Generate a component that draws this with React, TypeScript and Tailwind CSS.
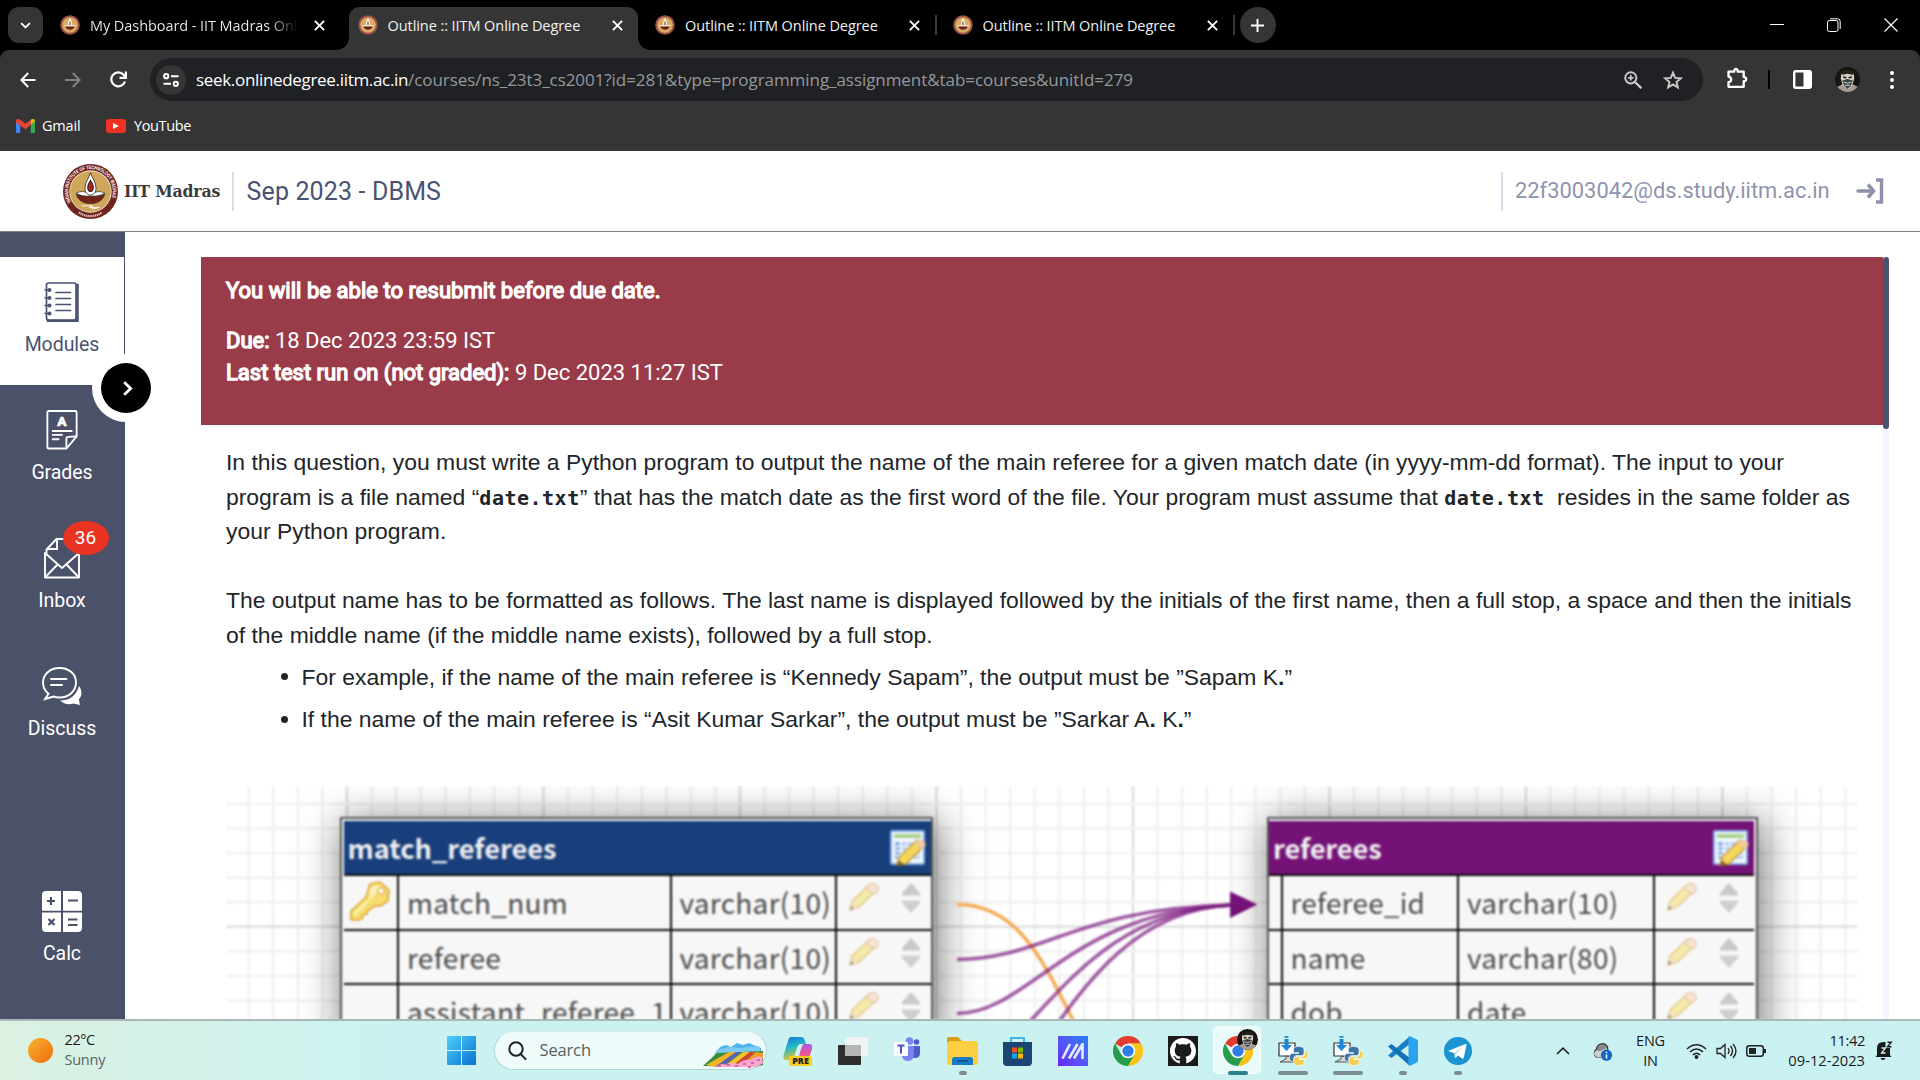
import React from 'react';

type P = { className?: string };

function Seal({ className = '' }: P) {
  return (
    <svg viewBox="0 0 100 100" className={className}>
      <circle cx="50" cy="50" r="50" fill="#702420" />
      <circle cx="50" cy="50" r="38.5" fill="#f3e6cf" />
      <circle cx="50" cy="50" r="37" fill="#cfa65a" />
      <defs>
        <path id="sealTop" d="M14.4 69 A40.5 40.5 0 1 1 85.6 69" />
      </defs>
      <text fill="#fff" fontSize="9.4" fontWeight="700" fontFamily="Liberation Sans, sans-serif">
        <textPath href="#sealTop" textLength="158" lengthAdjust="spacingAndGlyphs">INDIAN INSTITUTE OF TECHNOLOGY MADRAS</textPath>
      </text>
      <path d="M29 88c12 9 30 9 42 0" fill="none" stroke="#e8cfc4" strokeWidth="4" strokeDasharray="2.2 1.2" />
      <path d="M50 16c-3 10-10 17-10 28 0 8 4 13 10 13s10-5 10-13c0-11-7-18-10-28z" fill="#fff" stroke="#222" strokeWidth="1.4" />
      <path d="M50 30c-3 4-5 8-5 12 0 5 2 8 5 8s5-3 5-8c0-4-2-8-5-12z" fill="#c21f1f" stroke="#222" strokeWidth="2" />
      <path d="M24 53c8-4 16-4 20 1 4 4 8 4 12 0 4-5 12-5 20-1-6 4-14 6-26 6s-20-2-26-6z" fill="#fff" stroke="#222" strokeWidth="1.2" />
      <path d="M24 54c2 11 12 18 26 18s24-7 26-18c-6 4-14 5-26 5s-20-1-26-5z" fill="#74231b" stroke="#222" strokeWidth="1" />
      <path d="M34 76h20l-6 3h18l-14 3" fill="none" stroke="#fff" strokeWidth="1.6" />
    </svg>
  );
}

function MiniSeal() {
  return (
    <svg viewBox="0 0 20 20" className="size-5 shrink-0">
      <circle cx="10" cy="10" r="9.8" fill="#9b5148" />
      <circle cx="10" cy="10" r="7.8" fill="#d8ad62" />
      <path d="M10 3c-1 2-2 3.500-2 5.500 0 1.500.8 2.500 2 2.500s2-1 2-2.500c0-2-1-3.500-2-5.500z" fill="#fff" />
      <path d="M9.400 6.500h1.200v4H9.400z" fill="#8b2c26" />
      <path d="M4.500 10.300h11v1.200h-11z" fill="#fff" />
      <path d="M5.200 11.500h9.600c-.6 2-2.400 3.200-4.800 3.200s-4.200-1.200-4.800-3.200z" fill="#6d231d" />
    </svg>
  );
}

function X({ className = '' }: P) {
  return (
    <svg viewBox="0 0 10 10" className={className} stroke="#fff" fill="none">
      <path d="M.8.8l8.400 8.400M9.200.8L.8 9.200" strokeWidth="1.700" />
    </svg>
  );
}

function Tab({ title, active, fade, divider }: { title: string; active?: boolean; fade?: boolean; divider?: boolean }) {
  return (
    <div className="relative flex h-full w-[297.5px] shrink-0 items-start pt-[7px]">
      {active && (
        <>
          <div className="absolute -left-3 bottom-0 size-3 bg-[radial-gradient(circle_at_0_0,#000_11.5px,#353535_12px)]" />
          <div className="absolute right-[-3.5px] bottom-0 size-3 bg-[radial-gradient(circle_at_100%_0,#000_11.5px,#353535_12px)]" />
        </>
      )}
      <div className={`relative flex h-[43px] w-[289px] items-center pb-[7px] pl-[9px] ${active ? 'rounded-t-[11px] bg-[#353535]' : ''}`}>
        <MiniSeal />
        <span className="ml-[10px] w-[210px] overflow-hidden pt-px text-[14.5px] tracking-[-0.07px] whitespace-nowrap text-[#f1f1f1]">
          {fade ? (
            <span className="block bg-gradient-to-r from-[#f1f1f1] from-85% to-transparent to-[99%] bg-clip-text text-transparent">{title}</span>
          ) : (
            title
          )}
        </span>
        <X className="ml-[14px] size-[11px]" />
      </div>
      {divider && <div className="absolute top-[15px] right-[6.5px] h-5 w-[2px] bg-[#3a3a3a]" />}
    </div>
  );
}

function TabStrip() {
  return (
    <div className="flex h-[50px] shrink-0 bg-black">
      <div className="mt-[7px] ml-2 flex h-9 w-[35px] items-center justify-center rounded-[11px] bg-[#353535]">
        <svg viewBox="0 0 12 8" className="h-[7px] w-[11px]" fill="none" stroke="#fff" strokeWidth="2">
          <path d="M1 1.200l5 5 5-5" />
        </svg>
      </div>
      <div className="ml-2 flex">
        <Tab title="My Dashboard - IIT Madras Onli" fade />
        <Tab title="Outline :: IITM Online Degree" active />
        <Tab title="Outline :: IITM Online Degree" divider />
        <Tab title="Outline :: IITM Online Degree" divider />
      </div>
      <div className="mt-[7px] -ml-[1.500px] flex h-9 w-9 items-center justify-center rounded-full bg-[#353535]">
        <svg viewBox="0 0 14 14" className="size-[13px]" stroke="#fff" strokeWidth="2">
          <path d="M7 0v14M0 7h14" />
        </svg>
      </div>
      <div className="mr-[22px] ml-auto flex h-[49px] items-center gap-[43px]">
        <div className="h-px w-[14px] bg-white" />
        <svg viewBox="0 0 14 14" className="size-[14px]" fill="none" stroke="#fff">
          <rect x=".5" y="2.500" width="10.500" height="11" rx="1.800" />
          <path d="M3 .8h7.500a2.700 2.700 0 0 1 2.700 2.700V11" />
        </svg>
        <svg viewBox="0 0 14 14" className="size-[14px]" stroke="#fff" strokeWidth="1.200">
          <path d="M.5.5l13 13M13.500.5l-13 13" />
        </svg>
      </div>
    </div>
  );
}

function Avatar({ className = '' }: P) {
  return (
    <svg viewBox="0 0 26 26" className={className}>
      <defs>
        <clipPath id="avatarClip">
          <circle cx="13" cy="13" r="13" />
        </clipPath>
      </defs>
      <g clipPath="url(#avatarClip)">
        <rect width="26" height="26" fill="#17150f" />
        <path d="M1 21l7-3 5 6 5-6 7 3v5H1z" fill="#a59a94" />
        <path d="M6.500 7c1-3 12-3 13 0l.5 5-2 7-5 5-5-5-2-7z" fill="#d8d0c4" />
        <path d="M6 7c0-5 14-5 14 0l-2 1-5-1-5 1z" fill="#26221b" />
        <path d="M8 9.500l4 .8v1.500H9zM18 9.500l-4 .8v1.500h3z" fill="#1b1b1b" />
        <path d="M7.500 14l5.500-1.500 5.500 1.500-2 5.500-3.500 3.500-3.500-3.500z" fill="#3c4246" />
        <path d="M9 15.500l4 1.500 4-1.500M10.500 19h5" fill="none" stroke="#d4d9d9" strokeWidth="1" />
      </g>
    </svg>
  );
}

function Toolbar() {
  return (
    <div className="shrink-0 bg-black">
      <div className="flex h-[101px] flex-col rounded-t-[9px] bg-[#353535]">
        <div className="flex h-[58px] items-center pt-[1px]">
          <div className="ml-5 flex w-[130px] items-center gap-[29px]">
            <svg viewBox="0 0 16 16" className="size-4" fill="none" stroke="#fff" strokeWidth="2">
              <path d="M15.500 8H1.500M8.200 1L1.400 8l6.800 7" />
            </svg>
            <svg viewBox="0 0 16 16" className="size-4" fill="none" stroke="#828282" strokeWidth="2">
              <path d="M0 8h14.500M7.800 1l6.800 7-6.800 7" />
            </svg>
            <svg viewBox="0 0 17 17" className="size-[17px]" fill="none" stroke="#fff" strokeWidth="2.200">
              <path d="M15 10.500a7 7 0 1 1-1.600-7L15.500 6" />
              <path d="M15.900.5v6.400H9.500" />
            </svg>
          </div>
          <div className="flex h-[43px] w-[1553px] items-center rounded-full bg-[#202124] pl-[6px]">
            <div className="flex size-[30px] items-center justify-center rounded-full bg-[#353535]">
              <svg viewBox="0 0 16 14" className="h-[14px] w-4" fill="none" stroke="#fff" strokeWidth="2">
                <circle cx="3.200" cy="3.200" r="2.100" />
                <path d="M8 3.200h7.500M.5 10.800H8" />
                <circle cx="12.800" cy="10.800" r="2.100" />
              </svg>
            </div>
            <span className="ml-[10px] w-[212px] text-[17px] tracking-[-0.32px] whitespace-nowrap text-white">seek.onlinedegree.iitm.ac.in</span>
            <span className="text-[17px] tracking-[-0.06px] whitespace-nowrap text-[#96999c]">
              /courses/ns_23t3_cs2001?id=281&amp;type=programming_assignment&amp;tab=courses&amp;unitId=279
            </span>
            <svg viewBox="0 0 18 18" className="mr-[21px] ml-auto size-[18px]" fill="none" stroke="#c7c7c7" strokeWidth="2">
              <circle cx="6.800" cy="6.800" r="5.600" />
              <path d="M10.800 10.800l6.500 6.500" strokeWidth="2.300" />
              <path d="M6.800 4v5.600M4 6.800h5.600" strokeWidth="1.800" />
            </svg>
            <svg viewBox="0 0 20 20" className="mr-[20px] size-5" fill="none" stroke="#c7c7c7" strokeWidth="2">
              <path d="M10 2.800l2.200 5.100 5.500.5-4.200 3.600 1.300 5.400L10 14.500l-4.800 2.900L6.500 12 2.300 8.400l5.500-.5z" />
            </svg>
          </div>
          <svg viewBox="0 0 22 22" className="mb-1 ml-[22.500px] size-[22px]" fill="none" stroke="#fff" strokeWidth="2.300">
            <path d="M2.500 4.700h5.700c-.3-3.600 3.800-3.600 3.500 0h6v5.400c3.300-.2 3.300 4.300 0 4.100v5.600H2.500v-4.600c3.500-.3 3.500-5.300 0-5.600z" strokeLinejoin="round" />
          </svg>
          <div className="ml-[20.500px] h-[19px] w-[2px] bg-black" />
          <svg viewBox="0 0 19 19" className="ml-[23px] size-[19px]">
            <rect x="1.200" y="1.200" width="16.600" height="16.600" rx="1.500" fill="none" stroke="#fff" strokeWidth="2.400" />
            <rect x="10.500" y="1" width="7.500" height="17" fill="#fff" />
          </svg>
          <Avatar className="ml-[23px] size-[25px]" />
          <svg viewBox="0 0 4 18" className="ml-[30px] h-[18px] w-1" fill="#fff">
            <circle cx="2" cy="2" r="2" />
            <circle cx="2" cy="9" r="2" />
            <circle cx="2" cy="16" r="2" />
          </svg>
        </div>
        <div className="flex h-9 items-center pl-4 text-[14.500px] text-white">
          <svg viewBox="0 0 19 14" className="h-[14px] w-[19px]">
            <path d="M0 1.500V14h4.300V6z" fill="#4285f4" />
            <path d="M19 1.500V14h-4.300V6z" fill="#34a853" />
            <path d="M19 2L14.700 6V0.800C16.500-.6 19 0 19 2z" fill="#fbbc04" />
            <path d="M0 2C0 0 2.500-.6 4.300.8L9.500 4.800 14.700.8V6L9.500 10.300 4.300 6.400 0 3.800z" fill="#ea4335" />
          </svg>
          <span className="ml-[7px] w-[64px] tracking-[-0.2px]">Gmail</span>
          <div className="flex h-[14px] w-5 items-center justify-center rounded-[3px] bg-[#f03224]">
            <svg viewBox="0 0 6 6" className="size-[6px]">
              <path d="M0 0l6 3-6 3z" fill="#fff" />
            </svg>
          </div>
          <span className="ml-2 tracking-[-0.37px]">YouTube</span>
        </div>
      </div>
    </div>
  );
}

function PageHeader() {
  return (
    <div className="flex h-[81px] shrink-0 items-center border-b border-[#808080] bg-white font-[Roboto,sans-serif]">
      <Seal className="ml-[63px] size-[55px]" />
      <span className="ml-[6px] w-[98px] font-['DejaVu_Serif_Condensed','DejaVu_Serif',serif] text-[17.500px] font-bold tracking-[-0.18px] whitespace-nowrap text-[#3b3b3b] [font-stretch:condensed]">
        IIT Madras
      </span>
      <div className="ml-[10px] h-[39px] w-[2px] bg-[#d8dbe9]" />
      <span className="ml-[12.500px] pt-px text-[25px] tracking-[0.14px] text-[#4a5372]">Sep 2023 - DBMS</span>
      <div className="ml-auto h-[39px] w-[2px] bg-[#d8dbe9]" />
      <span className="ml-3 w-[317px] text-[21.900px] whitespace-nowrap text-[#9093ad]">22f3003042@ds.study.iitm.ac.in</span>
      <svg viewBox="0 0 28 26" className="mr-[36px] ml-[24px] h-[26px] w-7" fill="none" stroke="#8f90aa" strokeWidth="3.400">
        <path d="M2 13h14" strokeLinecap="round" />
        <path d="M12 6.500l5.500 6.500-5.500 6.500" strokeWidth="3.600" />
        <path d="M20 2h5.500v22H20" strokeWidth="3.400" />
      </svg>
    </div>
  );
}

const ModulesIcon = () => (
  <svg viewBox="0 0 36 40" className="h-10 w-9" fill="none" stroke="#4a5372" strokeWidth="1.700">
    <rect x="2.500" y="1" width="29.500" height="37" rx="2" />
    <path d="M32 3h1.500v36H4v-1.500" strokeWidth="2.500" />
    <path d="M12 10.500h14.500M12 16.500h14.500M12 22.500h14.500M12 28.500h14.500" strokeLinecap="round" />
    <path d="M.5 8h6M.5 16h6M.5 23.500h6M.5 31.500h6" strokeWidth="1.500" />
    <path d="M5.500 8h.01M5.500 16h.01M5.500 23.500h.01M5.500 31.500h.01" strokeWidth="4" strokeLinecap="round" />
  </svg>
);
const GradesIcon = () => (
  <svg viewBox="0 0 32 41" className="h-10 w-[32px]" fill="none" stroke="#fff" strokeWidth="1.900">
    <path d="M1 2.500Q1 1 2.500 1h27Q31 1 31 2.500V27L20.500 39.500H2.500Q1 39.500 1 38z" />
    <path d="M20.500 39V29.500Q20.500 27.500 22.500 27.500L31 27" />
    <path d="M6.500 21.500H26M6.500 25.500h9.500M6.500 30h6" strokeLinecap="round" />
    <text x="16" y="16.500" textAnchor="middle" fill="#fff" stroke="#fff" strokeWidth=".6" fontFamily="Roboto, sans-serif" fontWeight="900" fontSize="14">A</text>
  </svg>
);
const InboxIcon = () => (
  <svg viewBox="0 0 36 41" className="h-[41px] w-9" fill="none" stroke="#fff" strokeWidth="1.900">
    <path d="M1 15v24.500h34V15L18 30z" strokeLinejoin="round" />
    <path d="M1 39.500L13.500 26.500M35 39.500L22.500 26.500" />
    <path d="M2.500 15.500v-4L12.500 1H31a2.500 2.500 0 0 1 2.500 2.500v12M13 1v10H2.500" />
  </svg>
);
const DiscussIcon = () => (
  <svg viewBox="0 0 40 39" className="h-[39px] w-10" fill="none" stroke="#fff" strokeWidth="1.900">
    <path d="M17.500 1C8 1 1 7.500 1 15.500c0 4.500 2 8.500 5.500 11.200L3 32l8.500-2.500c2 .8 4 1 6 1C27 30.500 34 24 34 15.500S27 1 17.500 1z" />
    <path d="M9 12h15.500M9 18h11" strokeLinecap="round" />
    <path d="M37 19c1.500 2 2.500 4.500 2.500 7s-1 4.500-2.700 6.300L38 38l-6.500-1.500c-5 1.500-10 .5-13.500-3.200 9 .8 16.500-4.800 19-14.300z" fill="#fff" stroke="none" />
  </svg>
);
const CalcIcon = () => (
  <svg viewBox="0 0 40 41" className="h-[41px] w-10">
    <path d="M4 0h15v19.800H0V4a4 4 0 0 1 4-4zM21 0h15a4 4 0 0 1 4 4v15.800H21zM0 21.500h19V41H4a4 4 0 0 1-4-4zM21 21.500h19V37a4 4 0 0 1-4 4H21z" fill="#fff" />
    <path d="M5 10h8M9 6v8M26 9.500h10M26 28.500h9.500M26 34h9.500M6.500 28l6 6M12.500 28l-6 6" stroke="#4a5168" strokeWidth="2.200" />
  </svg>
);

function NavItem({ label, icon, active, badge }: { label: string; icon: React.ReactNode; active?: boolean; badge?: string }) {
  return (
    <div className={`relative flex h-32 w-[124px] shrink-0 flex-col items-center pt-[25px] ${active ? 'bg-white text-[#4a5372]' : 'text-white'}`}>
      <div className="flex h-10 items-center">{icon}</div>
      <span className="mt-[9px] text-[19.500px] leading-7 tracking-[-0.05px]">{label}</span>
      {badge && (
        <div className="absolute top-[8px] left-[62.500px] flex h-[34px] w-[46px] items-center justify-center rounded-[50%] bg-[#e93323] text-[19px] text-white">{badge}</div>
      )}
    </div>
  );
}

function Sidebar() {
  return (
    <div className="relative z-10 flex w-[125px] shrink-0 flex-col bg-[#4a5168] pt-[25px] font-[Roboto,sans-serif]">
      <NavItem label="Modules" icon={<ModulesIcon />} active />
      <NavItem label="Grades" icon={<GradesIcon />} />
      <NavItem label="Inbox" icon={<InboxIcon />} badge="36" />
      <NavItem label="Discuss" icon={<DiscussIcon />} />
      <div className="h-[97px] shrink-0" />
      <NavItem label="Calc" icon={<CalcIcon />} />
      <div className="absolute top-[122px] left-[92px] flex size-[68px] items-center justify-center rounded-full bg-white">
        <div className="flex size-[50px] items-center justify-center rounded-full bg-black">
          <svg viewBox="0 0 10 15" className="ml-[3px] h-[15px] w-[10px]" fill="none" stroke="#fff" strokeWidth="2.800">
            <path d="M1.200 1.200l6.500 6.300-6.500 6.300" />
          </svg>
        </div>
      </div>
    </div>
  );
}

const Pencil = ({ className = '' }: P) => (
  <svg viewBox="0 0 30 30" className={className}>
    <path d="M1 28l2-9L20 3l7 6L10 25z" fill="#f5eaa9" stroke="#e2cc92" strokeWidth="1.500" />
    <path d="M3.500 19.500l6 5L3 27.500z" fill="#f5dfc6" />
    <path d="M1 28l1-4 3 2.500z" fill="#9c8b78" />
    <path d="M19 4q4-4 8-1t1 7l-3 2-8-6z" fill="#f7e6d6" stroke="#e5c5a2" strokeWidth="1.200" />
  </svg>
);
const Sorter = ({ className = '' }: P) => (
  <svg viewBox="0 0 18 30" className={className}>
    <path d="M9 0l9 10v2.500H0V10z" fill="#c9c9c9" />
    <path d="M9 30l9-10v-2.500H0V20z" fill="#cfcfcf" />
  </svg>
);
const TableEdit = () => (
  <svg viewBox="0 0 36 37" className="mt-px h-[37px] w-9">
    <rect x="1" y="1" width="33" height="33" rx="1" fill="#f2f7ff" stroke="#86aee6" strokeWidth="2" />
    <rect x="4" y="4" width="27" height="4" fill="#a9d38e" />
    <path d="M5 12h5v17H5z" fill="#8fb0e6" />
    <path d="M12 12h18v17H12z" fill="#b4cdf3" />
    <path d="M5 16.500h25M5 21h25M5 25.500h25M17 12v17M23 12v17" stroke="#f2f7ff" strokeWidth="1.300" />
    <path d="M7 35l2-8 18-17 7 6-18 18z" fill="#f3d65a" stroke="#c39a45" strokeWidth="1.400" />
    <path d="M26 11q4-3 8 0 3 3 0 7l-2 1-8-6z" fill="#f0c9a2" />
    <path d="M7 36l1.500-6 6 5z" fill="#8a6420" />
  </svg>
);
const Key = () => (
  <svg viewBox="0 0 40 40" className="size-10">
    <path d="M20 3l10-2 9 8-1 11-8 5h-6l-3 3-3 1-1 4-4 1-1 4-4 1H1v-9l15-14z" fill="#f5dd6b" stroke="#dba43a" strokeWidth="1.600" strokeLinejoin="round" />
    <path d="M20 7l7-3 5 2-13 14z" fill="#fbf2b8" />
    <circle cx="31" cy="10" r="3.200" fill="#fff" stroke="#dba43a" strokeWidth="1.200" />
    <path d="M4 34l14-14" stroke="#fbf2b8" strokeWidth="2.500" />
  </svg>
);

type Row = { name: string; type: string; pk?: boolean };

function LeftTable({ rows }: { rows: Row[] }) {
  return (
    <div className="absolute top-[31px] left-[114px] w-[593px] border-2 border-b-0 border-[#555] bg-[#f2f2f2] pt-[2px] pl-[1.500px] text-[28px] text-[#4b4b4b] shadow-[4px_6px_36px_3px_rgba(0,0,0,0.5)]">
      <div className="flex h-[53px] items-center justify-between bg-[#183e7b] pr-[5px] pl-[4px]">
        <span className="text-[27.200px] leading-[53px] font-bold tracking-[-0.02px] text-[#f0f0f0]">match_referees</span>
        <TableEdit />
      </div>
      {rows.map((r) => (
        <div key={r.name} className="flex h-[54.500px] border-t-2 border-[#0c0c0c] bg-[#f7f7f7] leading-[52px] whitespace-nowrap">
          <div className="w-[55px] border-r-2 border-[#0c0c0c] pt-[5px] pl-[6px]">{r.pk && <Key />}</div>
          <div className="w-[273px] border-r-2 border-[#0c0c0c] pl-[8.500px] tracking-[0.3px]">{r.name}</div>
          <div className="w-[165px] border-r-2 border-[#0c0c0c] pl-[8px] tracking-[0.3px]">{r.type}</div>
          <div className="flex pt-[6px] pl-[12.500px]">
            <Pencil className="size-[30px]" />
            <Sorter className="mt-px ml-[22.500px] h-[30px] w-[18px]" />
          </div>
        </div>
      ))}
    </div>
  );
}

function RightTable({ rows }: { rows: Row[] }) {
  return (
    <div className="absolute top-[31px] left-[1041px] w-[491px] border-2 border-b-0 border-[#555] bg-[#f2f2f2] pt-[2px] pr-[2px] text-[28px] text-[#4b4b4b] shadow-[4px_6px_36px_3px_rgba(0,0,0,0.5)]">
      <div className="flex h-[53px] items-center justify-between bg-[#741277] pr-[5px] pl-[4px]">
        <span className="text-[27.200px] leading-[53px] font-bold tracking-[-0.1px] text-[#f0f0f0]">referees</span>
        <TableEdit />
      </div>
      {rows.map((r) => (
        <div key={r.name} className="flex h-[54.500px] border-t-2 border-[#0c0c0c] bg-[#f7f7f7] leading-[52px] whitespace-nowrap">
          <div className="w-[13.500px] border-r-2 border-[#0c0c0c]" />
          <div className="w-[176.500px] border-r-2 border-[#0c0c0c] pl-[8px] tracking-[0.2px]">{r.name}</div>
          <div className="w-[196px] border-r-2 border-[#0c0c0c] pl-[8px] tracking-[0.3px]">{r.type}</div>
          <div className="flex pt-[6px] pl-[12px]">
            <Pencil className="size-[30px]" />
            <Sorter className="mt-px ml-[23px] h-[30px] w-[18px]" />
          </div>
        </div>
      ))}
    </div>
  );
}

const V = Array.from({ length: 67 }, (_, i) => 22.8 + i * 24.56);
const H = Array.from({ length: 10 }, (_, i) => 18 + i * 24.56);

function Diagram() {
  return (
    <div className="relative mt-[50px] ml-[25px] h-[234px] w-[1632px] shrink-0 overflow-hidden">
      <div className="absolute inset-0 font-['Noto_Sans_CJK_SC',sans-serif] blur-[0.8px]">
        <svg viewBox="0 0 1632 234" className="absolute inset-0 h-[234px] w-[1632px]">
          {V.map((x, i) => (
            <path key={i} d={`M${x} 0V234`} stroke={i % 8 === 4 ? '#dedede' : '#f1f1f1'} strokeWidth="2.500" />
          ))}
          {H.map((y, i) => (
            <path key={i} d={`M0 ${y}H1632`} stroke={i === 5 ? '#dedede' : '#f1f1f1'} strokeWidth="2.500" />
          ))}
        </svg>
        <LeftTable
          rows={[
            { name: 'match_num', type: 'varchar(10)', pk: true },
            { name: 'referee', type: 'varchar(10)' },
            { name: 'assistant_referee_1', type: 'varchar(10)' },
          ]}
        />
        <RightTable
          rows={[
            { name: 'referee_id', type: 'varchar(10)' },
            { name: 'name', type: 'varchar(80)' },
            { name: 'dob', type: 'date' },
          ]}
        />
        <svg viewBox="226 786 1632 234" className="absolute inset-0 h-[234px] w-[1632px]" fill="none" strokeWidth="3.600">
          <path d="M957 904.500C1020 904 1045 965 1078 1030" stroke="#f5ab56" />
          <g stroke="#7b1a80" strokeOpacity=".72">
            <path d="M957 959.500C1045 959 1075 908 1232 905" />
            <path d="M957 1013.500C1030 1013 1070 911 1232 905" />
            <path d="M957 1068C1030 1068 1068 912 1232 905" />
            <path d="M957 1122C1035 1122 1070 912 1232 905" />
          </g>
          <path d="M1230 891.500L1257.500 904.500 1230 918z" fill="#741277" />
        </svg>
      </div>
    </div>
  );
}

function Code({ children }: { children: React.ReactNode }) {
  return <code className="font-['DejaVu_Sans_Mono',monospace] text-[20px] leading-none font-bold tracking-[0.5px]">{children}</code>;
}

function Bullet({ children }: { children: React.ReactNode }) {
  return (
    <li className="flex items-center pb-[7.700px] pl-[54.500px]">
      <span className="mr-[14px] size-[7px] rounded-full bg-[#212529]" />
      <span>{children}</span>
    </li>
  );
}

function Strong({ children }: { children: React.ReactNode }) {
  return <span className="[-webkit-text-stroke:1.300px_#fff]">{children}</span>;
}

function Content() {
  return (
    <div className="flex min-w-0 flex-1 overflow-hidden bg-white pt-[25px] pl-[76px]">
      <div className="flex w-[1682px] shrink-0 flex-col">
        <div className="h-[168px] shrink-0 bg-[#9a3b49] pt-[18px] pl-[25px] font-[Roboto,sans-serif] text-[22px] leading-8 whitespace-nowrap text-white">
          <p className="tracking-[0.03px]">
            <Strong>You will be able to resubmit before due date.</Strong>
          </p>
          <p className="mt-[17.500px] tracking-[-0.02px]">
            <Strong>Due:</Strong> 18 Dec 2023 23:59 IST
          </p>
          <p className="tracking-[-0.01px]">
            <Strong>Last test run on (not graded):</Strong> 9 Dec 2023 11:27 IST
          </p>
        </div>
        <div className="mt-5 pl-[25px] font-['Liberation_Sans',Arial,sans-serif] text-[22.920px] leading-[34.600px] whitespace-nowrap text-[#212529]">
          <p>In this question, you must write a Python program to output the name of the main referee for a given match date (in yyyy-mm-dd format). The input to your</p>
          <p className="h-[34.600px]">
            program is a file named “<Code>date.txt</Code>” that has the match date as the first word of the file. Your program must assume that <Code>date.txt&nbsp;</Code>resides in the same folder as
          </p>
          <p>your Python program.</p>
          <p className="mt-[34.600px]">
            The output name has to be formatted as follows. The last name is displayed followed by the initials of the first name, then a full stop, a space and then the initials
          </p>
          <p>of the middle name (if the middle name exists), followed by a full stop.</p>
          <ul className="pt-[7px]">
            <Bullet>
              For example, if the name of the main referee is “Kennedy Sapam”, the output must be ”Sapam K<b>.</b>”
            </Bullet>
            <Bullet>
              If the name of the main referee is “Asit Kumar Sarkar”, the output must be ”Sarkar A<b>.</b> K<b>.</b>”
            </Bullet>
          </ul>
        </div>
        <div className="-mt-[8px]">
          <Diagram />
        </div>
      </div>
      <div className="w-[6px] shrink-0 bg-[#f4f7ff]">
        <div className="h-[172px] rounded-[3px] bg-[#4a5372]" />
      </div>
    </div>
  );
}

function Chrome({ className = '' }: P) {
  return (
    <svg viewBox="0 0 30 30" className={className}>
      <path d="M15 15L2 7.500A15 15 0 0 1 28 7.500H15z" fill="#e33b2e" />
      <path d="M15 7.500h13A15 15 0 0 1 15 30l6.500-11.250z" fill="#fbc116" />
      <path d="M15 15l6.500 3.750L15 30A15 15 0 0 1 2 7.500l6.500 11.250z" fill="#269d4b" />
      <circle cx="15" cy="15" r="7.300" fill="#fff" />
      <circle cx="15" cy="15" r="5.700" fill="#2f7de9" />
    </svg>
  );
}

const PythonInstaller = () => (
  <svg viewBox="0 0 30 30" className="h-[30px] w-[30px]">
    <path d="M1 7h16v13H1z" fill="#fdfdfd" stroke="#333" strokeWidth="1.200" />
    <path d="M8 20v3l-6 3h14v-4z" fill="#d6d6d6" stroke="#555" />
    <path d="M6.500 0h4v1.800h-4zM6.500 3h4v6H14l-5.500 6L3 9h3.500z" fill="#1c86d8" />
    <g transform="translate(11.500 10.500)">
      <path d="M9 0C5 0 4 1.500 4 3.500V6h5v1H2.500C.8 7 0 9 0 11s1 4 2.500 4H4v-3c0-2 1.500-3 3-3h5c1.500 0 2.500-1 2.500-2.500v-3C14.500 1.500 13 0 9 0z" fill="#3a74a6" stroke="#fff" strokeWidth=".6" />
      <path d="M9.500 19c4 0 5-1.500 5-3.500V13h-5v-1H16c1.700 0 2.500-2 2.500-4s-1-3.500-2.500-3.500h-1v3c0 2-1.500 3-3 3H7c-1.500 0-2.500 1-2.500 2.500v2.500C4.500 17.500 5.500 19 9.500 19z" fill="#f5cf49" stroke="#fff" strokeWidth=".6" />
    </g>
  </svg>
);

function AppCell({ children, mark, boxed }: { children: React.ReactNode; mark?: 'dot' | 'bar' | 'active'; boxed?: boolean }) {
  return (
    <div className="relative flex h-[59px] w-[55px] shrink-0 items-center justify-center">
      {boxed && <div className="absolute top-[5px] left-[3px] h-12 w-[48px] rounded-[5px] border border-white/60 bg-white/60" />}
      <div className="relative flex">{children}</div>
      {mark === 'dot' && <div className="absolute bottom-[5px] left-[23.500px] h-1 w-2 rounded-full bg-[#7b8f90]" />}
      {mark === 'bar' && <div className="absolute bottom-[5px] left-[12.500px] h-1 w-[30px] rounded-full bg-[#7b8f90]" />}
      {mark === 'active' && <div className="absolute bottom-[5px] left-[17.500px] h-1 w-5 rounded-full bg-[#29838d]" />}
    </div>
  );
}

function Taskbar() {
  return (
    <div className="flex h-[61px] shrink-0 items-center border-t-2 border-[#a9b8b6] bg-gradient-to-r from-[#dbf1e2] via-[#cbf2f0] via-20% to-[#caf1f2] text-[#1b1b1b]">
      <div className="flex w-[447px] items-center pb-px pl-[27.500px]">
        <div className="size-[25px] rounded-full bg-gradient-to-br from-[#f5b32c] to-[#f0690c]" />
        <div className="ml-3 pb-px text-[14.500px] leading-5">
          <div className="tracking-[-0.4px]">22°C</div>
          <div className="tracking-[-0.25px] text-[#5b6665]">Sunny</div>
        </div>
      </div>
      <svg viewBox="0 0 29 29" className="size-[29px]">
        <defs>
          <linearGradient id="win" x1="0" y1="0" x2="1" y2="1">
            <stop offset="0" stopColor="#4fd0fb" />
            <stop offset="1" stopColor="#0870d0" />
          </linearGradient>
        </defs>
        <path d="M1 0h13v14H0V1a1 1 0 0 1 1-1zM15 0h13a1 1 0 0 1 1 1v13H15zM0 15h14v14H1a1 1 0 0 1-1-1zM15 15h14v13a1 1 0 0 1-1 1H15z" fill="url(#win)" />
      </svg>
      <div className="ml-[18px] flex h-[39px] w-[273px] items-center rounded-full border border-[#b2d6d6] border-t-[#d5e9e9] bg-[#effbfb] pl-[13px]">
        <svg viewBox="0 0 19 19" className="size-[19px]" fill="none" stroke="#222" strokeWidth="2">
          <circle cx="8" cy="8" r="6.700" />
          <path d="M12.500 13l5 5" strokeLinecap="round" />
        </svg>
        <span className="ml-[12.500px] text-[16.500px] tracking-[-0.15px] text-[#54605f]">Search</span>
        <svg viewBox="0 0 60 26" className="mt-2 mr-[3px] ml-auto h-[26px] w-[60px]">
          <path d="M12 12l5-7 6-2 5 2 6-4 6 2 6-2 7 3 5 2v10H10z" fill="#4fb4ec" />
          <path d="M14 8l12-3 10 1 20-2 2 8H12z" fill="#7ccbf5" />
          <path d="M0 24L14 11l46-2v14l-8 2z" fill="#3e8a3a" />
          <path d="M3 23L26 10h7L12 25z" fill="#f0b429" />
          <path d="M12 25L33 10h5L20 25z" fill="#5a63b5" />
          <path d="M20 25L40 10h7L28 25z" fill="#f4c430" />
          <path d="M28 25L47 10h5L36 25z" fill="#d8432e" />
          <path d="M36 25l17-15 7 1v5l-12 9z" fill="#f29b25" />
          <path d="M13 25q5-5 10-2 6-4 12-1 6-5 12-4 7-5 12-3l1 6-6 4z" fill="#f7a6cf" />
          <path d="M15 24h3M24 23h3M32 24h3M40 22h3M48 21h3M54 18h3M45 25h3" stroke="#e85da5" strokeWidth="2" />
        </svg>
      </div>
      <div className="ml-[3px] flex">
        <AppCell>
          <svg viewBox="0 0 30 30" className="size-[30px]">
            <defs>
              <linearGradient id="cop1" x1="0" y1="0" x2="0.300" y2="1">
                <stop offset="0" stopColor="#1a6fd8" />
                <stop offset=".5" stopColor="#22b8c9" />
                <stop offset="1" stopColor="#e8c22b" />
              </linearGradient>
              <linearGradient id="cop2" x1="0" y1="0" x2="0" y2="1">
                <stop offset="0" stopColor="#a95be8" />
                <stop offset=".6" stopColor="#f0568a" />
                <stop offset="1" stopColor="#f79a3e" />
              </linearGradient>
            </defs>
            <path d="M8 1h10q3 0 4 4l1 3h-5q-3 0-4 4l-3 9q-1 3-4 3H3q-4 0-2-6l4-13q1-4 3-4z" fill="url(#cop1)" />
            <path d="M18 8h8q4 0 3 5l-3 9q-1 4-5 4h-9q3 0 4-4z" fill="url(#cop2)" />
            <path d="M17 8l-5 13h3l5-13z" fill="#d9f1f6" />
            <rect x="6" y="20" width="23" height="10" rx="2" fill="#f9cf1a" />
            <text x="17.500" y="28.300" textAnchor="middle" fontSize="9" fontWeight="800" fontFamily="Open Sans, sans-serif" fill="#222">PRE</text>
          </svg>
        </AppCell>
        <AppCell>
          <svg viewBox="0 0 30 28" className="h-7 w-[30px]">
            <rect y="8" width="23" height="20" rx="1" fill="#2d2d2d" />
            <rect x="7" width="23" height="19" rx="1" fill="#f4f4f4" fillOpacity=".9" />
            <rect x="7" y="8" width="16" height="11" fill="#b5b5b5" />
          </svg>
        </AppCell>
        <AppCell>
          <svg viewBox="0 0 27 24" className="mb-[3px] h-6 w-[27px]">
            <circle cx="15.500" cy="4" r="3.800" fill="#7b83eb" />
            <circle cx="22.500" cy="5" r="2.800" fill="#5059c9" />
            <path d="M19 9h7v7q0 5-5 5-2 0-3-1z" fill="#5059c9" />
            <path d="M8 9h12v8q0 7-6 7-5 0-6-5z" fill="#7b83eb" />
            <rect y="5" width="14" height="14" rx="1.200" fill="#fdfdff" />
            <path d="M3.500 8.500h7M7 8.500v8" stroke="#4b53bc" strokeWidth="2" />
          </svg>
        </AppCell>
        <AppCell mark="dot">
          <svg viewBox="0 0 31 28" className="h-7 w-[31px]">
            <path d="M0 2a2 2 0 0 1 2-2h9l4 4v6H0z" fill="#dc9f12" />
            <path d="M2 4h27a2 2 0 0 1 2 2v20a2 2 0 0 1-2 2H2a2 2 0 0 1-2-2V6z" fill="#fccf42" />
            <path d="M5 28v-5a3 3 0 0 1 3-3h15a3 3 0 0 1 3 3v5z" fill="#1a7ac6" />
            <path d="M10 24h11" stroke="#0b4d8a" strokeWidth="1.500" />
          </svg>
        </AppCell>
        <AppCell>
          <svg viewBox="0 0 29 30" className="h-[30px] w-[29px]">
            <path d="M8 7V2h13v5" fill="none" stroke="#3db8e8" strokeWidth="2" />
            <path d="M0 6h29v20q0 4-4 4H4q-4 0-4-4z" fill="#1b4573" />
            <path d="M9 11.500h5v5H9z" fill="#f25022" />
            <path d="M15 11.500h5v5h-5z" fill="#7fba00" />
            <path d="M9 17.500h5v5H9z" fill="#15a5ef" />
            <path d="M15 17.500h5v5h-5z" fill="#ffb900" />
          </svg>
        </AppCell>
        <AppCell>
          <div className="flex size-[30px] items-center justify-center bg-gradient-to-tr from-[#6a1cf5] to-[#1b7df8]">
            <svg viewBox="0 0 24 16" className="h-4 w-6" fill="none" stroke="#e6ecff" strokeWidth="2.600">
              <path d="M1.500 15.500L9 1M8 15.500L16.500 1" />
              <path d="M13 15.500L21.500 1v15" />
            </svg>
          </div>
        </AppCell>
        <AppCell>
          <Chrome className="size-[30px]" />
        </AppCell>
        <AppCell>
          <div className="flex size-[30px] items-center justify-center bg-[#1d1a1b]">
            <svg viewBox="0 0 16 16" className="size-[26px]" fill="#fff">
              <path d="M8 0C3.580 0 0 3.580 0 8c0 3.540 2.290 6.530 5.470 7.590.4.070.55-.17.55-.38 0-.19-.01-.82-.01-1.490-2.010.37-2.530-.49-2.690-.94-.09-.23-.48-.94-.82-1.130-.28-.15-.68-.52-.01-.53.63-.01 1.080.58 1.230.82.72 1.210 1.870.87 2.330.66.07-.52.28-.87.51-1.070-1.780-.2-3.640-.89-3.640-3.950 0-.87.31-1.590.82-2.150-.08-.2-.36-1.020.08-2.120 0 0 .67-.21 2.200.82.64-.18 1.320-.27 2-.27s1.360.09 2 .27c1.530-1.040 2.200-.82 2.200-.82.44 1.100.16 1.920.08 2.120.51.56.82 1.270.82 2.150 0 3.070-1.870 3.750-3.650 3.950.29.25.54.73.54 1.480 0 1.070-.01 1.930-.01 2.200 0 .21.15.46.55.38A8.010 8.010 0 0 0 16 8c0-4.420-3.580-8-8-8z" />
            </svg>
          </div>
        </AppCell>
        <AppCell mark="active" boxed>
          <Chrome className="size-[30px]" />
          <Avatar className="absolute -top-[7px] left-[14px] size-[21px]" />
        </AppCell>
        <AppCell mark="bar">
          <PythonInstaller />
        </AppCell>
        <AppCell mark="bar">
          <PythonInstaller />
        </AppCell>
        <AppCell mark="dot">
          <svg viewBox="0 0 30 30" className="size-[30px]">
            <path d="M0 19.500L21.500.5v7.700L3.500 22z" fill="#1a7fc4" />
            <path d="M0 10.500L3.500 8 21.500 21.800v7.700z" fill="#1273b8" />
            <path d="M21.500 0L29 3.500q1 .5 1 2v19q0 1.500-1 2L21.500 30q-1 0-1-2V2q0-2 1-2z" fill="#2ba3ec" />
          </svg>
        </AppCell>
        <AppCell mark="dot">
          <svg viewBox="0 0 28 28" className="size-7">
            <circle cx="14" cy="14" r="14" fill="#1c93d2" />
            <path d="M5 13.500L21.500 7q1.200-.3 1 1l-2.800 13q-.4 1.200-1.500.6L14 18.500l-2 2.200q-.8.600-1-.5l-1-4.200-5-1.500q-.8-.5 0-1z" fill="#fff" />
            <path d="M10 16l8.500-6.200-6.500 7.200-.6 3.500z" fill="#b9d9ea" />
          </svg>
        </AppCell>
      </div>
      <div className="ml-[71px] flex items-center">
        <svg viewBox="0 0 14 8" className="h-2 w-[14px]" fill="none" stroke="#222" strokeWidth="1.600">
          <path d="M1 7l6-5.800L13 7" />
        </svg>
        <svg viewBox="0 0 22 18" className="mt-[2px] ml-[21px] h-[18px] w-[22px]">
          <path d="M6 14.500a5 5 0 0 1-.5-8.500 6 6 0 0 1 11-2.500l.5 7-8 4z" fill="#8a8a8a" stroke="#3a3a3a" strokeWidth="1.200" />
          <path d="M3 11a4 4 0 0 1 6-3l7-3v6l-7 3.500H6z" fill="#cfcfcf" />
          <circle cx="15.500" cy="12.200" r="5.600" fill="#1169bf" />
          <path d="M15.500 8.700v1.600M15.500 11.500v4" stroke="#fff" strokeWidth="1.600" />
        </svg>
        <div className="ml-[22px] w-[31px] text-center text-[14.500px] leading-5 tracking-[-0.25px]">
          <div>ENG</div>
          <div>IN</div>
        </div>
        <svg viewBox="0 0 21 16" className="ml-[20px] h-4 w-[21px]" fill="none" stroke="#222" strokeWidth="1.500">
          <path d="M1 6q9.500-8.500 19 0M4 9q6.500-6 13 0M6.800 12q3.700-3.500 7.400 0" />
          <circle cx="10.500" cy="14" r="1.200" fill="#222" />
        </svg>
        <svg viewBox="0 0 21 16" className="ml-[9px] h-4 w-[21px]" fill="none" stroke="#222" strokeWidth="1.300">
          <path d="M1 5.500h3.500L9 1.500v13L4.500 10.500H1z" />
          <path d="M12 5q2 3 0 6M14.500 3q4 5 0 10M17 1q6 7 0 14" />
        </svg>
        <svg viewBox="0 0 21 12" className="ml-[9px] h-3 w-[21px]" fill="none" stroke="#222" strokeWidth="1.500">
          <rect x=".8" y=".8" width="16.500" height="10.400" rx="2.500" />
          <rect x="3" y="3" width="7" height="6" fill="#222" stroke="none" />
          <path d="M19 4v4" strokeWidth="2" />
        </svg>
        <div className="mb-[2px] ml-[19px] w-[79px] text-right text-[14.700px] leading-5 whitespace-nowrap">
          <div className="tracking-[-0.4px]">11:42</div>
          <div>09-12-2023</div>
        </div>
        <svg viewBox="0 0 18 19" className="mb-px ml-[10px] h-[19px] w-[18px]">
          <path d="M2 14V7q0-6 6.500-6h2v6H15v7l1.500 2H.5z" fill="#1b1b1b" />
          <path d="M5.500 17h5q-.5 2-2.500 2t-2.500-2z" fill="#1b1b1b" />
          <path d="M6.500 7h4l-4 5h4" fill="none" stroke="#d4f2f2" strokeWidth="1.300" />
          <path d="M12.500 1.200h3.800l-3.800 4.600h4" fill="none" stroke="#1b1b1b" strokeWidth="1.400" />
        </svg>
      </div>
    </div>
  );
}

export default function App() {
  return (
    <div className="flex h-[1080px] w-[1920px] flex-col overflow-hidden bg-white font-['Open_Sans','Noto_Sans',sans-serif]">
      <TabStrip />
      <Toolbar />
      <PageHeader />
      <div className="flex min-h-0 flex-1 overflow-hidden">
        <Sidebar />
        <Content />
      </div>
      <Taskbar />
    </div>
  );
}
